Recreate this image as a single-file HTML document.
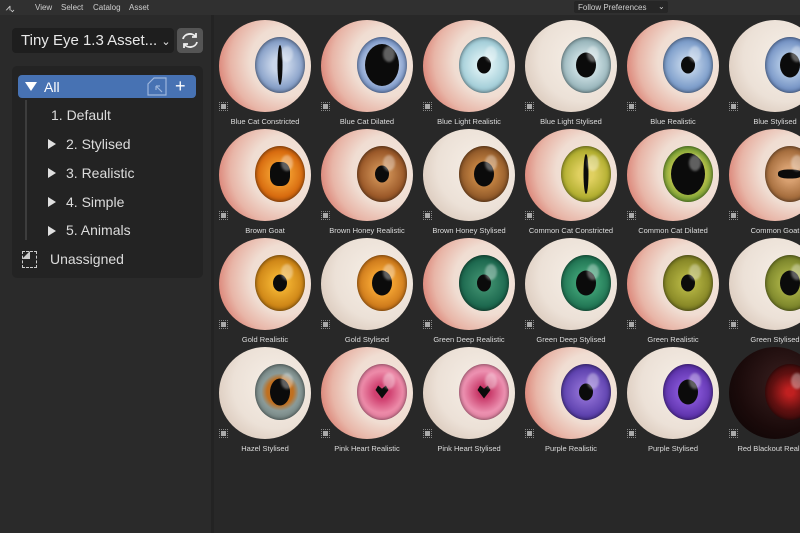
<!DOCTYPE html>
<html><head><meta charset="utf-8"><style>
*{margin:0;padding:0;box-sizing:border-box}
body{width:800px;height:533px;overflow:hidden;background:#282828;font-family:"Liberation Sans",sans-serif;position:relative}
.top{position:absolute;left:0;top:0;width:800px;height:15px;background:#303030;color:#cfcfcf;font-size:8px}
.top span{position:absolute;top:3px}
.side{position:absolute;left:0;top:15px;width:214px;height:518px;background:#2a2a2a;border-right:3px solid #232323}
.dd{position:absolute;left:12px;top:28px;width:162px;height:25px;background:#1e1e1e;border-radius:4px;color:#e8e8e8;font-size:15px;line-height:25px;padding-left:9px}
.rf{position:absolute;left:177px;top:28px;width:26px;height:25px;background:#555;border-radius:4px}
.panel{position:absolute;left:12px;top:66px;width:191px;height:212px;background:#232323;border-radius:5px}
.sel{position:absolute;left:18px;top:75px;width:178px;height:23px;background:#4772b3;border-radius:4px}
.it{position:absolute;color:#dcdcdc;font-size:14px}
.tri{position:absolute;width:0;height:0;border-top:5px solid transparent;border-bottom:5px solid transparent;border-left:8px solid #e0e0e0}
.c{position:absolute;width:102px;height:108px}
.e{position:absolute;left:5px;top:0;width:92px;height:92px;border-radius:50%;overflow:hidden}
.r{background:radial-gradient(circle at 72% 45%,#f4e9e0 0%,#f0ddd2 42%,#e8b5a7 66%,#d8786b 86%,#c5564c 100%)}
.s{background:radial-gradient(circle at 62% 42%,#f7f0e8 0%,#ece1d7 55%,#d8c6b8 85%,#b09e92 100%)}
.i{position:absolute;left:36px;top:17px;width:50px;height:56px;border-radius:50%;box-shadow:inset 0 0 4px rgba(0,0,0,.6)}
.p{position:absolute;left:50%;top:50%;transform:translate(-50%,-50%);background:#0b0b0b;border-radius:50%}
.ps{width:14px;height:17px}.pd{width:34px;height:42px}.pl{width:5px;height:40px}
.cb{position:absolute;left:5px;top:82px;width:9px;height:9px;border:1px dotted #888}
.cb:after{content:"";position:absolute;left:1px;top:1px;width:5px;height:5px;background:#aaa}
.l{position:absolute;left:-10px;width:122px;top:97px;text-align:center;color:#dcdcdc;font-size:7.5px}
.hl{position:absolute;left:26px;top:9px;width:12px;height:16px;background:rgba(255,255,255,.35);border-radius:50%;filter:blur(1px)}
</style></head><body>
<div class="top"><span style="left:6px;font-weight:bold">⩘⌄</span><span style="left:35px">View</span><span style="left:61px">Select</span><span style="left:93px">Catalog</span><span style="left:129px">Asset</span>
<div style="position:absolute;left:574px;top:1px;width:94px;height:12px;background:#262626;border-radius:2px"><span style="left:4px;top:2px">Follow Preferences</span><span style="left:84px;top:1px">⌄</span></div></div>
<div class="side"></div>
<div class="dd">Tiny Eye 1.3 Asset... <span style="font-size:11px">⌄</span></div>
<div class="rf"><svg width="26" height="25" viewBox="0 0 26 25"><path d="M6 11a7 6 0 0 1 13-2M20 14a7 6 0 0 1-13 2" fill="none" stroke="#eee" stroke-width="1.8"/><path d="M19 5v4h-4M7 20v-4h4" fill="none" stroke="#eee" stroke-width="1.8"/></svg></div>
<div class="panel"></div>
<div class="sel"></div>
<div style="position:absolute;left:25px;top:82px;width:0;height:0;border-left:6px solid transparent;border-right:6px solid transparent;border-top:9px solid #fff"></div>
<div class="it" style="left:44px;top:79px;color:#fff">All</div>
<svg style="position:absolute;left:147px;top:77px" width="20" height="19"><path d="M1 18V7l6-6h12v17z" fill="none" stroke="#9db6dc" stroke-width="1.2"/><path d="M9 9l6 6M9 9v4M9 9h4" stroke="#9db6dc" stroke-width="1.2" fill="none"/></svg>
<div style="position:absolute;left:175px;top:78px;color:#fff;font-size:18px;line-height:16px">+</div>
<div style="position:absolute;left:25px;top:100px;width:2px;height:140px;background:#3d3d3d"></div>
<div class="it" style="left:51px;top:107px">1. Default</div>
<div class="tri" style="left:48px;top:139px"></div><div class="it" style="left:66px;top:136px">2. Stylised</div>
<div class="tri" style="left:48px;top:168px"></div><div class="it" style="left:66px;top:165px">3. Realistic</div>
<div class="tri" style="left:48px;top:197px"></div><div class="it" style="left:66px;top:194px">4. Simple</div>
<div class="tri" style="left:48px;top:226px"></div><div class="it" style="left:66px;top:222px">5. Animals</div>
<div style="position:absolute;left:22px;top:251px;width:15px;height:17px;border:1px dashed #ccc"></div>
<div style="position:absolute;left:22px;top:251px;width:8px;height:8px;background:#ccc;clip-path:polygon(0 100%,100% 0,100% 100%)"></div>
<div class="it" style="left:50px;top:251px">Unassigned</div>

<!-- row 1 -->
<div class="c" style="left:214px;top:20px"><div class="e r"><div class="i" style="background:radial-gradient(circle,#c9d6ea 20%,#8aa2c9 60%,#4d6796 100%)"><div class="p pl"></div><div class="hl"></div></div></div><div class="cb"></div><div class="l">Blue Cat Constricted</div></div>
<div class="c" style="left:316px;top:20px"><div class="e r"><div class="i" style="background:radial-gradient(circle,#b3c4e2 40%,#6f8ec4 75%,#3e5a8e 100%)"><div class="p pd"></div><div class="hl"></div></div></div><div class="cb"></div><div class="l">Blue Cat Dilated</div></div>
<div class="c" style="left:418px;top:20px"><div class="e r"><div class="i" style="background:radial-gradient(circle,#d8eef2 20%,#a7d0da 60%,#6f9aaa 100%)"><div class="p ps"></div><div class="hl"></div></div></div><div class="cb"></div><div class="l">Blue Light Realistic</div></div>
<div class="c" style="left:520px;top:20px"><div class="e s"><div class="i" style="background:radial-gradient(circle,#c8dce0 30%,#92b0b6 70%,#5d7378 100%)"><div class="p ps" style="width:20px;height:25px"></div><div class="hl"></div></div></div><div class="cb"></div><div class="l">Blue Light Stylised</div></div>
<div class="c" style="left:622px;top:20px"><div class="e r"><div class="i" style="background:radial-gradient(circle,#b9cde6 20%,#7f9fcb 60%,#4f6b9c 100%)"><div class="p ps"></div><div class="hl"></div></div></div><div class="cb"></div><div class="l">Blue Realistic</div></div>
<div class="c" style="left:724px;top:20px"><div class="e s"><div class="i" style="background:radial-gradient(circle,#a8c0e0 30%,#6d8cc0 70%,#3f5a8c 100%)"><div class="p ps" style="width:20px;height:25px"></div><div class="hl"></div></div></div><div class="cb"></div><div class="l">Blue Stylised</div></div>
<!-- row 2 -->
<div class="c" style="left:214px;top:129px"><div class="e r"><div class="i" style="background:radial-gradient(circle,#f4a030 20%,#d86c10 60%,#8a3a08 100%)"><div class="p" style="width:20px;height:24px;border-radius:40%"></div><div class="hl"></div></div></div><div class="cb"></div><div class="l">Brown Goat</div></div>
<div class="c" style="left:316px;top:129px"><div class="e r"><div class="i" style="background:radial-gradient(circle,#c98a50 20%,#9c5a2a 60%,#5d3416 100%)"><div class="p ps"></div><div class="hl"></div></div></div><div class="cb"></div><div class="l">Brown Honey Realistic</div></div>
<div class="c" style="left:418px;top:129px"><div class="e s"><div class="i" style="background:radial-gradient(circle,#c08040 30%,#8a5426 70%,#4a2c12 100%)"><div class="p ps" style="width:20px;height:25px"></div><div class="hl"></div></div></div><div class="cb"></div><div class="l">Brown Honey Stylised</div></div>
<div class="c" style="left:520px;top:129px"><div class="e r"><div class="i" style="background:radial-gradient(circle,#e0d060 20%,#b4b032 60%,#6e7a1c 100%)"><div class="p pl"></div><div class="hl"></div></div></div><div class="cb"></div><div class="l">Common Cat Constricted</div></div>
<div class="c" style="left:622px;top:129px"><div class="e r"><div class="i" style="background:radial-gradient(circle,#c8c850 40%,#6a9a30 75%,#2c5a18 100%)"><div class="p pd"></div><div class="hl"></div></div></div><div class="cb"></div><div class="l">Common Cat Dilated</div></div>
<div class="c" style="left:724px;top:129px"><div class="e r"><div class="i" style="background:radial-gradient(circle,#d8a070 20%,#a87040 60%,#6a4020 100%)"><div class="p" style="width:24px;height:9px;border-radius:40%"></div><div class="hl"></div></div></div><div class="cb"></div><div class="l">Common Goat</div></div>
<!-- row 3 -->
<div class="c" style="left:214px;top:238px"><div class="e r"><div class="i" style="background:radial-gradient(circle,#f0b030 20%,#d08818 60%,#8a5208 100%)"><div class="p ps"></div><div class="hl"></div></div></div><div class="cb"></div><div class="l">Gold Realistic</div></div>
<div class="c" style="left:316px;top:238px"><div class="e s"><div class="i" style="background:radial-gradient(circle,#f0a030 30%,#c87418 70%,#7a420a 100%)"><div class="p ps" style="width:20px;height:25px"></div><div class="hl"></div></div></div><div class="cb"></div><div class="l">Gold Stylised</div></div>
<div class="c" style="left:418px;top:238px"><div class="e r"><div class="i" style="background:radial-gradient(circle,#3a8a6a 20%,#1e6a50 60%,#0c3a2a 100%)"><div class="p ps"></div><div class="hl"></div></div></div><div class="cb"></div><div class="l">Green Deep Realistic</div></div>
<div class="c" style="left:520px;top:238px"><div class="e s"><div class="i" style="background:radial-gradient(circle,#3a9a70 30%,#1e7050 70%,#0c3a28 100%)"><div class="p ps" style="width:20px;height:25px"></div><div class="hl"></div></div></div><div class="cb"></div><div class="l">Green Deep Stylised</div></div>
<div class="c" style="left:622px;top:238px"><div class="e r"><div class="i" style="background:radial-gradient(circle,#b0b040 20%,#8a8a28 60%,#4c5014 100%)"><div class="p ps"></div><div class="hl"></div></div></div><div class="cb"></div><div class="l">Green Realistic</div></div>
<div class="c" style="left:724px;top:238px"><div class="e s"><div class="i" style="background:radial-gradient(circle,#a0a840 30%,#768028 70%,#404814 100%)"><div class="p ps" style="width:20px;height:25px"></div><div class="hl"></div></div></div><div class="cb"></div><div class="l">Green Stylised</div></div>
<!-- row 4 -->
<div class="c" style="left:214px;top:347px"><div class="e s"><div class="i" style="background:radial-gradient(circle,#c07020 35%,#8a9a98 50%,#5d6e6c 100%)"><div class="p" style="width:20px;height:27px"></div><div class="hl"></div></div></div><div class="cb"></div><div class="l">Hazel Stylised</div></div>
<div class="c" style="left:316px;top:347px"><div class="e r"><div class="i" style="background:radial-gradient(circle,#d04070 20%,#ec8aa8 55%,#d86a90 100%)"><div class="p" style="width:13px;height:13px;clip-path:polygon(50% 100%,0 35%,20% 0,50% 25%,80% 0,100% 35%);border-radius:0"></div><div class="hl"></div></div></div><div class="cb"></div><div class="l">Pink Heart Realistic</div></div>
<div class="c" style="left:418px;top:347px"><div class="e s"><div class="i" style="background:radial-gradient(circle,#c83868 15%,#ec90b0 55%,#d87090 100%)"><div class="p" style="width:13px;height:13px;clip-path:polygon(50% 100%,0 35%,20% 0,50% 25%,80% 0,100% 35%);border-radius:0"></div><div class="hl"></div></div></div><div class="cb"></div><div class="l">Pink Heart Stylised</div></div>
<div class="c" style="left:520px;top:347px"><div class="e r"><div class="i" style="background:radial-gradient(circle,#8a6ad0 20%,#6044b0 60%,#2e1c70 100%)"><div class="p ps"></div><div class="hl"></div></div></div><div class="cb"></div><div class="l">Purple Realistic</div></div>
<div class="c" style="left:622px;top:347px"><div class="e s"><div class="i" style="background:radial-gradient(circle,#8050d0 30%,#5a30a8 70%,#2a1460 100%)"><div class="p ps" style="width:20px;height:25px"></div><div class="hl"></div></div></div><div class="cb"></div><div class="l">Purple Stylised</div></div>
<div class="c" style="left:724px;top:347px"><div class="e" style="background:radial-gradient(circle at 60% 40%,#3a2020 0%,#1a0a0a 60%,#080404 100%)"><div class="i" style="background:radial-gradient(circle,#c02020 10%,#601010 50%,#200808 100%)"><div class="hl"></div></div></div><div class="cb"></div><div class="l">Red Blackout Realistic</div></div>
</body></html>
